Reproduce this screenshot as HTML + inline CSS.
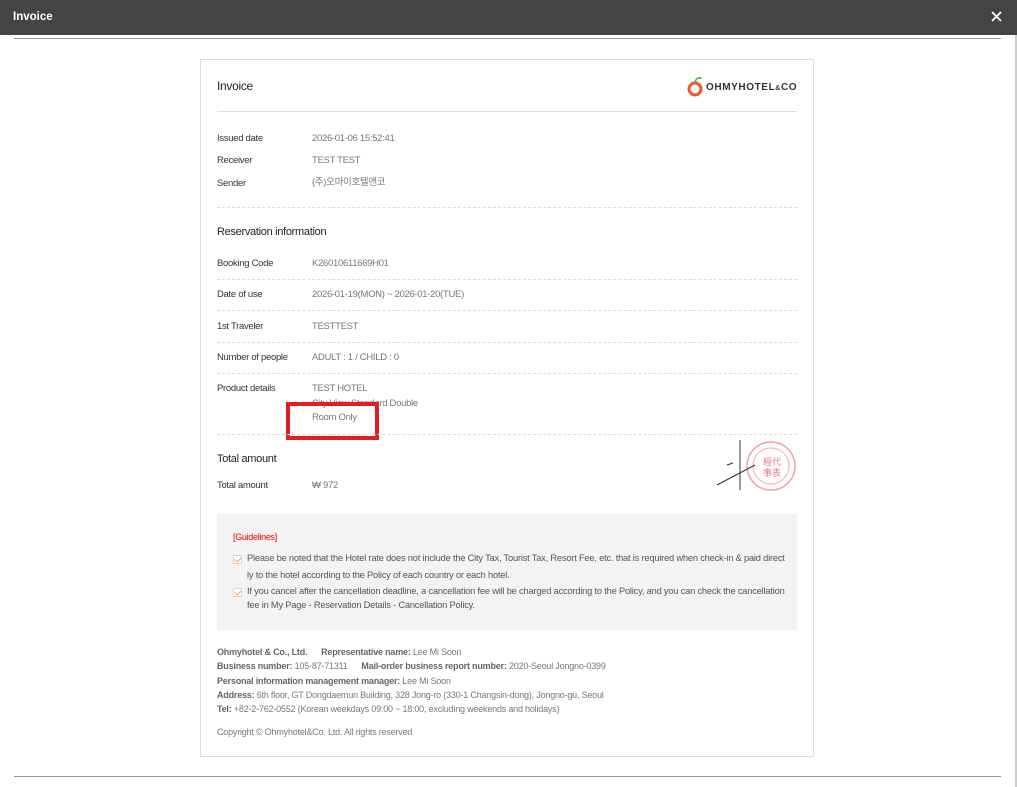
<!DOCTYPE html>
<html><head><meta charset="utf-8"><style>
*{margin:0;padding:0;box-sizing:border-box}
body{width:1017px;height:787px;background:#fff;font-family:"Liberation Sans","Noto Sans CJK KR",sans-serif;position:relative;overflow:hidden;color:#333}
.hdr{position:absolute;left:0;top:0;width:1017px;height:35px;background:#444}
.hdr .t{position:absolute;left:13px;top:11px;color:#fff;font-weight:bold;font-size:11.5px}
.hdr .x{position:absolute;left:991px;top:11px;width:11px;height:11px}
.abs{position:absolute}
.l{position:absolute;left:217px;font-size:9.5px;color:#333;letter-spacing:-0.3px;line-height:12px}
.v{position:absolute;left:312px;font-size:9.5px;color:#777;letter-spacing:-0.3px;line-height:12px}
.d{position:absolute;left:217px;width:580px;border-top:1px dashed #ddd}
.h{position:absolute;left:217px;font-size:11px;color:#222;letter-spacing:-0.3px}
.g{position:absolute;font-size:9.3px;color:#555;letter-spacing:-0.2px;line-height:17px;white-space:nowrap}
.f{position:absolute;left:217px;font-size:9px;color:#777;letter-spacing:-0.2px}
.f b{color:#666}
.chk{position:absolute;left:233px;width:9px;height:9px;border:1px solid #e8d0bc;background:#fff}
.chk:after{content:"";position:absolute;left:2px;top:0px;width:3px;height:5px;border-right:1px solid #f0a060;border-bottom:1px solid #f0a060;transform:rotate(45deg)}
</style></head><body>
<div class="hdr"><div class="t">Invoice</div>
<svg class="x" viewBox="0 0 11 11"><path d="M1 1L10 10M10 1L1 10" stroke="#fff" stroke-width="1.8"/></svg></div>
<div class="abs" style="left:14px;top:38px;width:987px;height:1px;background:#999"></div>
<div class="abs" style="left:1015px;top:35px;width:2px;height:752px;background:#ccc"></div>
<div class="abs" style="left:14px;top:776px;width:987px;height:1px;background:#999"></div>
<div class="abs" style="left:200px;top:59px;width:614px;height:698px;border:1px solid #ddd"></div>
<div class="h" style="top:79px;font-size:12px">Invoice</div>
<svg class="abs" style="left:687px;top:74px" width="18" height="24" viewBox="0 0 18 24"><circle cx="8" cy="15" r="6" fill="none" stroke="#f05a28" stroke-width="3"/><path d="M8 8L10 4" stroke="#4a4" stroke-width="1.5"/><path d="M10 4q3-2 5 0q-3 2-5 0z" fill="#3a3"/></svg>
<div class="abs" style="left:706px;top:82px;font-size:10px;font-weight:bold;color:#333;letter-spacing:0.6px">OHMYHOTEL<span style="font-size:7px">&amp;</span>CO</div>
<div class="abs" style="left:217px;top:111px;width:580px;height:1px;background:#ddd"></div>
<div class="l" style="top:133px">Issued date</div><div class="v" style="top:133px">2026-01-06 15:52:41</div>
<div class="l" style="top:155px">Receiver</div><div class="v" style="top:155px">TEST TEST</div>
<div class="l" style="top:178px">Sender</div><div class="v" style="top:177px">(주)오마이호텔앤코</div>
<div class="d" style="top:207px"></div>
<div class="h" style="top:226px">Reservation information</div>
<div class="l" style="top:258px">Booking Code</div><div class="v" style="top:258px">K26010611669H01</div>
<div class="d" style="top:279px"></div>
<div class="l" style="top:289px">Date of use</div><div class="v" style="top:289px">2026-01-19(MON) ~ 2026-01-20(TUE)</div>
<div class="d" style="top:310px"></div>
<div class="l" style="top:321px">1st Traveler</div><div class="v" style="top:321px">TESTTEST</div>
<div class="d" style="top:342px"></div>
<div class="l" style="top:352px">Number of people</div><div class="v" style="top:352px">ADULT : 1 / CHILD : 0</div>
<div class="d" style="top:373px"></div>
<div class="l" style="top:383px">Product details</div><div class="v" style="top:383px">TEST HOTEL</div>
<div class="v" style="top:398px">City View Standard Double</div>
<div class="v" style="top:412px">Room Only</div>
<div class="abs" style="left:286px;top:402px;width:93px;height:38px;border:4px solid #e02020"></div>
<div class="d" style="top:434px"></div>
<div class="h" style="top:453px">Total amount</div>
<div class="l" style="top:480px">Total amount</div><div class="v" style="top:480px">₩ 972</div>
<svg class="abs" style="left:715px;top:440px" width="84" height="54" viewBox="0 0 84 54"><circle cx="56" cy="26" r="24" fill="none" stroke="#f0a0a0" stroke-width="1.5"/><circle cx="56" cy="26" r="18" fill="none" stroke="#f3b0b0" stroke-width="1"/><text x="48" y="25" font-size="9" fill="#e77">經代</text><text x="48" y="36" font-size="9" fill="#e77">事表</text><path d="M25 0V50M2 45L40 25M12 25l6-2" stroke="#333" stroke-width="1" fill="none"/></svg>
<div class="abs" style="left:217px;top:514px;width:580px;height:116px;background:#f3f3f3"></div>
<div class="abs" style="left:233px;top:532px;font-size:9px;color:#e00;letter-spacing:-0.3px">[Guidelines]</div>
<div class="chk" style="top:555px"></div><div class="g" style="left:247px;top:550px">Please be noted that the Hotel rate does not include the City Tax, Tourist Tax, Resort Fee, etc. that is required when check-in &amp; paid direct<br>ly to the hotel according to the Policy of each country or each hotel.</div>
<div class="chk" style="top:588px"></div><div class="g" style="left:247px;top:584px;line-height:14px">If you cancel after the cancellation deadline, a cancellation fee will be charged according to the Policy, and you can check the cancellation<br>fee in My Page - Reservation Details - Cancellation Policy.</div>
<div class="f" style="top:647px"><b>Ohmyhotel &amp; Co., Ltd.</b>&nbsp;&nbsp;&nbsp;&nbsp;&nbsp;&nbsp;<b>Representative name:</b> Lee Mi Soon</div>
<div class="f" style="top:661px"><b>Business number:</b> 105-87-71311&nbsp;&nbsp;&nbsp;&nbsp;&nbsp;&nbsp;<b>Mail-order business report number:</b> 2020-Seoul Jongno-0399</div>
<div class="f" style="top:676px"><b>Personal information management manager:</b> Lee Mi Soon</div>
<div class="f" style="top:690px"><b>Address:</b> 6th floor, GT Dongdaemun Building, 328 Jong-ro (330-1 Changsin-dong), Jongno-gu, Seoul</div>
<div class="f" style="top:704px"><b>Tel:</b> +82-2-762-0552 (Korean weekdays 09:00 ~ 18:00, excluding weekends and holidays)</div>
<div class="f" style="top:727px">Copyright © Ohmyhotel&amp;Co. Ltd. All rights reserved</div>
</body></html>
